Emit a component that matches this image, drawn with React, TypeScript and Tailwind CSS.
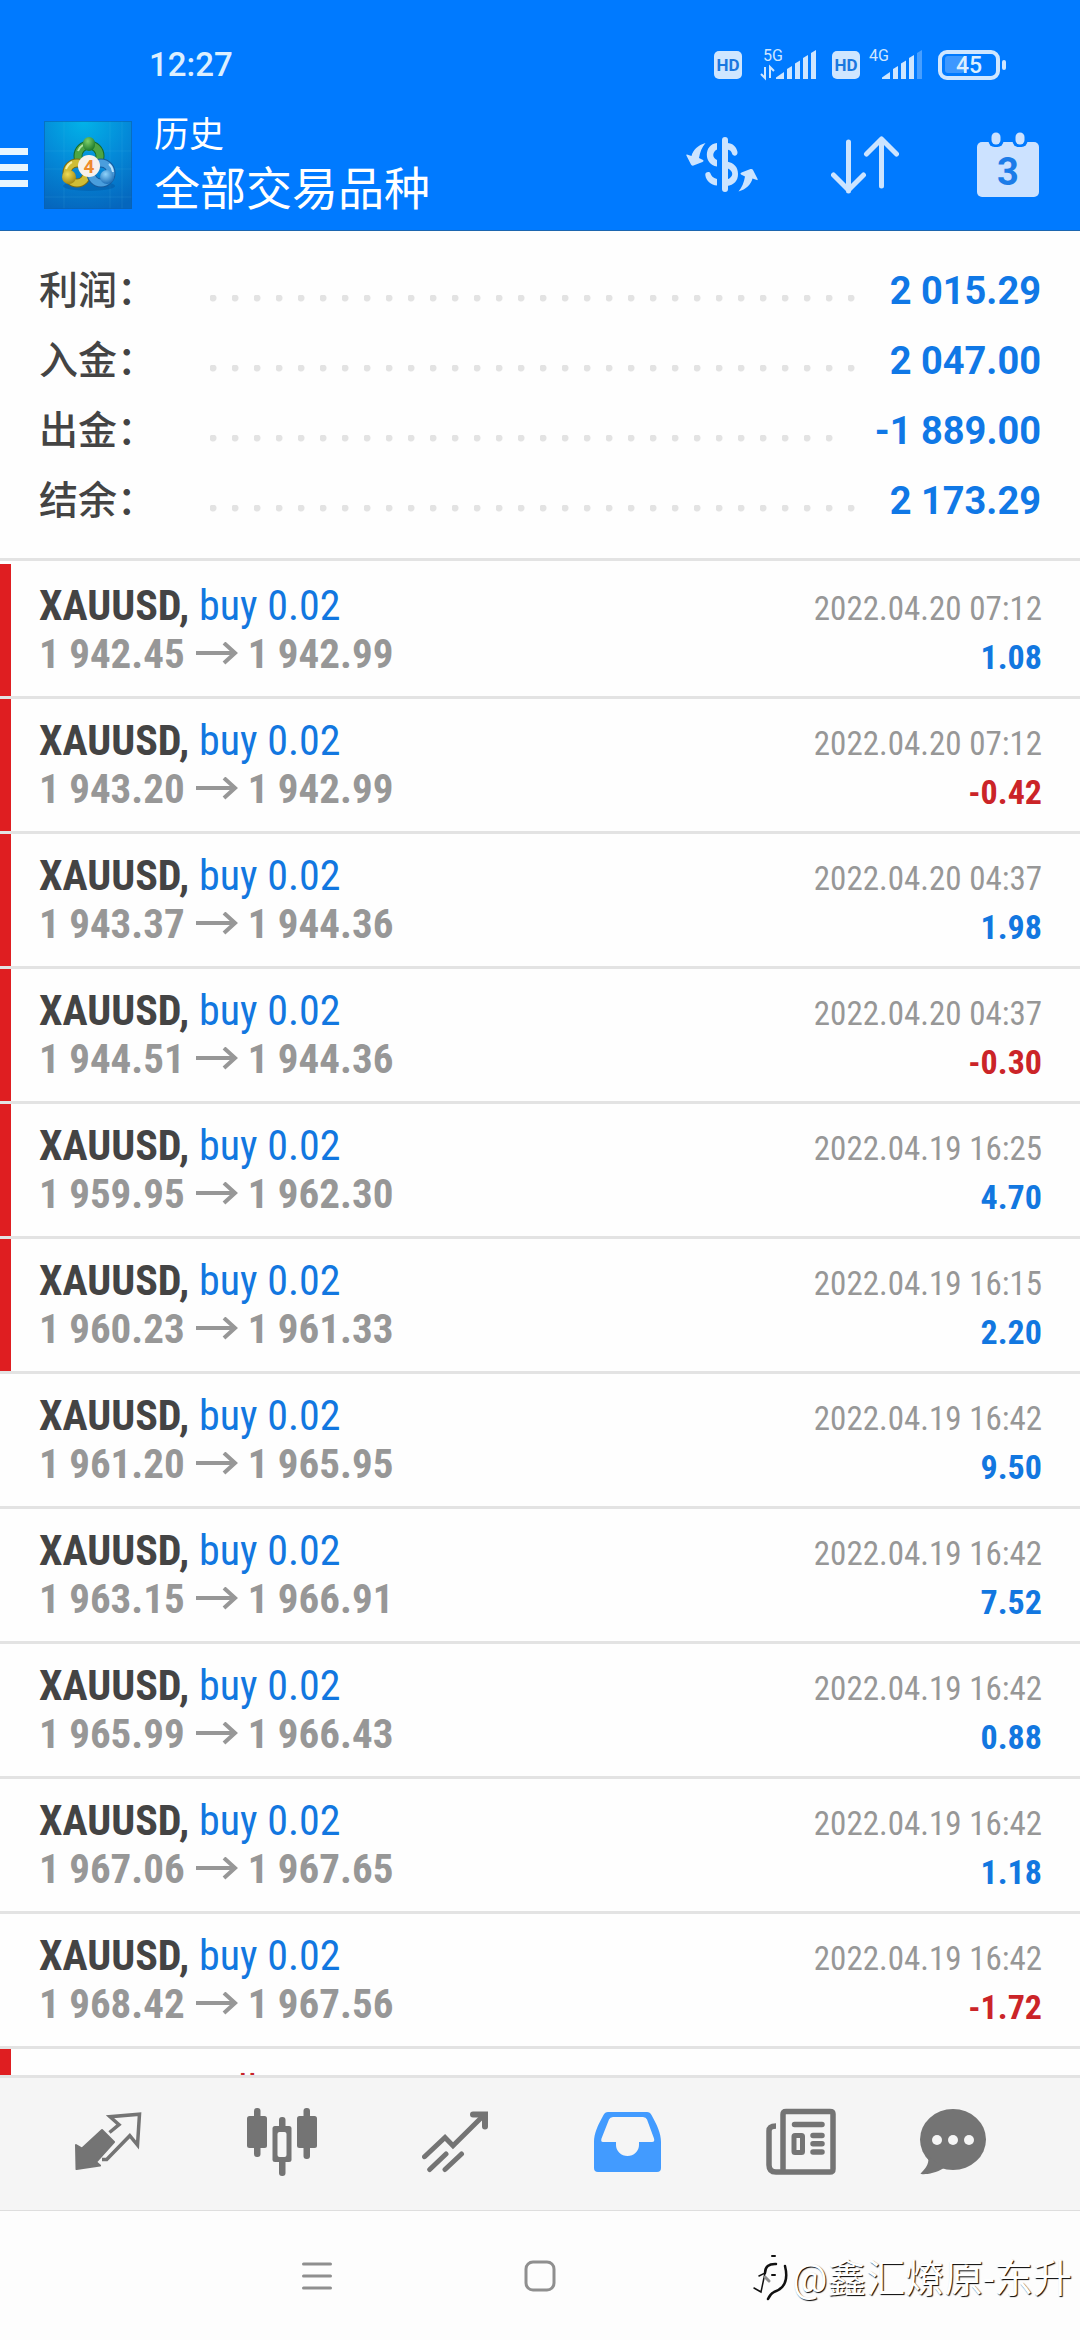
import type { ReactNode } from "react";

interface Deal {
  symbol: string;
  side: "buy" | "sell";
  volume: string;
  open?: string;
  close?: string;
  time?: string;
  profit?: string;
  marked: boolean;
}

const summary = [
  { label: "利润：", value: "2 015.29" },
  { label: "入金：", value: "2 047.00" },
  { label: "出金：", value: "-1 889.00" },
  { label: "结余：", value: "2 173.29" },
];

const deals: Deal[] = [
  { symbol: "XAUUSD", side: "buy", volume: "0.02", open: "1 942.45", close: "1 942.99", time: "2022.04.20 07:12", profit: "1.08", marked: true },
  { symbol: "XAUUSD", side: "buy", volume: "0.02", open: "1 943.20", close: "1 942.99", time: "2022.04.20 07:12", profit: "-0.42", marked: true },
  { symbol: "XAUUSD", side: "buy", volume: "0.02", open: "1 943.37", close: "1 944.36", time: "2022.04.20 04:37", profit: "1.98", marked: true },
  { symbol: "XAUUSD", side: "buy", volume: "0.02", open: "1 944.51", close: "1 944.36", time: "2022.04.20 04:37", profit: "-0.30", marked: true },
  { symbol: "XAUUSD", side: "buy", volume: "0.02", open: "1 959.95", close: "1 962.30", time: "2022.04.19 16:25", profit: "4.70", marked: true },
  { symbol: "XAUUSD", side: "buy", volume: "0.02", open: "1 960.23", close: "1 961.33", time: "2022.04.19 16:15", profit: "2.20", marked: true },
  { symbol: "XAUUSD", side: "buy", volume: "0.02", open: "1 961.20", close: "1 965.95", time: "2022.04.19 16:42", profit: "9.50", marked: false },
  { symbol: "XAUUSD", side: "buy", volume: "0.02", open: "1 963.15", close: "1 966.91", time: "2022.04.19 16:42", profit: "7.52", marked: false },
  { symbol: "XAUUSD", side: "buy", volume: "0.02", open: "1 965.99", close: "1 966.43", time: "2022.04.19 16:42", profit: "0.88", marked: false },
  { symbol: "XAUUSD", side: "buy", volume: "0.02", open: "1 967.06", close: "1 967.65", time: "2022.04.19 16:42", profit: "1.18", marked: false },
  { symbol: "XAUUSD", side: "buy", volume: "0.02", open: "1 968.42", close: "1 967.56", time: "2022.04.19 16:42", profit: "-1.72", marked: false },
  { symbol: "XAUUSD", side: "sell", volume: "0.02", marked: true },
];

function HdBadge() {
  return (
    <span className="flex size-7 items-center justify-center rounded-[5px] bg-[#cfe6ff] text-[17px] font-bold leading-none text-[#1a78e0]">
      HD
    </span>
  );
}

function Bars({ weak }: { weak?: boolean }) {
  return (
    <g fill="#cfe6ff">
      <path d="M0 30V28.500L8 23V30Z" />
      <path d="M11 20l5-3v13h-5z" />
      <path d="M19 14.500l5-3V30h-5z" />
      <path d="M27 9l5-3v24h-5z" />
      <path d="M35 4l5-3v29h-5z" opacity={weak ? 0.35 : 1} />
    </g>
  );
}

function StatusBar() {
  return (
    <div className="flex h-9 items-center justify-between pl-[149px] pr-[73px] text-[#dcefff]">
      <span className="text-[33px] font-medium leading-9">12:27</span>
      <div className="flex items-center gap-4">
        <div className="flex items-center gap-1">
          <HdBadge />
          <svg className="overflow-visible" width="70" height="32" viewBox="0 0 70 32">
            <text x="17" y="12" fontSize="16" fill="#cfe6ff">5G</text>
            <path d="M19 18v11l-4-4M24 29V18l4 4" fill="none" stroke="#cfe6ff" strokeWidth="2" />
            <g transform="translate(30 0)">
              <Bars />
            </g>
          </svg>
        </div>
        <div className="flex items-center gap-1">
          <HdBadge />
          <svg className="overflow-visible" width="58" height="32" viewBox="0 0 58 32">
            <text x="5" y="12" fontSize="16" fill="#cfe6ff">4G</text>
            <g transform="translate(18 0)">
              <Bars weak />
            </g>
          </svg>
        </div>
        <svg width="69" height="32" viewBox="0 0 69 32">
          <rect x="7" y="7" width="19" height="17" rx="3" fill="#3d98ff" />
          <rect x="2" y="3" width="58" height="26" rx="7" fill="none" stroke="#cfe6ff" strokeWidth="4" />
          <rect x="64" y="11" width="4" height="10" rx="2" fill="#cfe6ff" />
          <text x="31" y="24" fontSize="23" fontWeight="500" textAnchor="middle" fill="#dcefff">45</text>
        </svg>
      </div>
    </div>
  );
}

function AppLogo() {
  return (
    <svg width="88" height="88" viewBox="0 0 88 88">
      <defs>
        <radialGradient id="logoBg" cx="0.45" cy="0" r="1.05">
          <stop offset="0" stopColor="#02b3e8" />
          <stop offset="0.5" stopColor="#0489d8" />
          <stop offset="1" stopColor="#0566bd" />
        </radialGradient>
        <radialGradient id="green" cx="0.4" cy="0.3" r="0.7">
          <stop offset="0" stopColor="#7fd06a" />
          <stop offset="1" stopColor="#1c7a2c" />
        </radialGradient>
        <radialGradient id="yellow" cx="0.4" cy="0.3" r="0.7">
          <stop offset="0" stopColor="#f0dd58" />
          <stop offset="1" stopColor="#a48a12" />
        </radialGradient>
        <radialGradient id="blue" cx="0.4" cy="0.3" r="0.7">
          <stop offset="0" stopColor="#8fd3fb" />
          <stop offset="1" stopColor="#1d6fb8" />
        </radialGradient>
      </defs>
      <rect width="88" height="88" fill="url(#logoBg)" />
      <path d="M0 30H88M0 48H88M0 76H88M20 0V88M66 0V88M78 0V88" stroke="#5fc4f2" strokeOpacity="0.12" />
      <rect x="0.500" y="0.500" width="87" height="87" fill="none" stroke="#0a5fb0" strokeOpacity="0.6" />
      <ellipse cx="45" cy="65" rx="26" ry="5" fill="#044a92" opacity="0.35" />
      <g fill="none">
        <circle cx="45" cy="35" r="11" stroke="#17692a" strokeWidth="9" />
        <circle cx="45" cy="35" r="11" stroke="#4ea544" strokeWidth="7" />
        <circle cx="33" cy="52" r="10" stroke="#7d6b10" strokeWidth="9" />
        <circle cx="33" cy="52" r="10" stroke="#d0bd35" strokeWidth="7" />
        <circle cx="57" cy="52" r="10" stroke="#175a9c" strokeWidth="9" />
        <circle cx="57" cy="52" r="10" stroke="#4a9edd" strokeWidth="7" />
        <path d="M34 30a12 12 0 0 1 5-6" stroke="#b4e6a3" strokeWidth="2" />
        <path d="M22 48a12 12 0 0 1 6-7" stroke="#f8f0a2" strokeWidth="2" />
        <path d="M65 43a12 12 0 0 1 4 8" stroke="#b9e3fd" strokeWidth="2" />
      </g>
      <rect x="39" y="16" width="12" height="14" rx="6" fill="url(#green)" />
      <circle cx="25" cy="56" r="7" fill="url(#yellow)" />
      <circle cx="63" cy="56" r="7" fill="url(#blue)" />
      <circle cx="45" cy="45" r="11" fill="#f7f1ec" />
      <text x="45" y="52" fontSize="19" fontWeight="700" textAnchor="middle" fill="#ee8a2c">4</text>
    </svg>
  );
}

function CurrencyIcon() {
  const arrow =
    "M19.500 8C12 10 7 15 5.500 21L1 19.500Q0 19.300.4 20.500L5 29.500Q5.600 31 7.500 30.500L16.500 27Q18.500 26 17 25L13 23C14 17 16 12 19.500 8Z";
  return (
    <svg width="72" height="60" viewBox="0 0 72 60" fill="#cce4ff">
      <path d={arrow} />
      <path d={arrow} transform="rotate(180 36 32.300)" />
      <rect x="36" y="2" width="6" height="55" rx="3" />
      <path d="M31 8C17.500 9 17.500 30 31 31.500V25C26 23 26 17 31 14.500Z" />
      <path d="M31 50.500V44C27 43 25 40.500 24.500 38.500C23.500 36 18.800 37 19.300 40C20 46 25 50 31 50.500Z" />
      <path d="M41 8C47 8 50.500 12 51.500 17C52 21 47 22 46 18.500C45.500 16 44 15 41 14.500Z" />
      <path d="M41 26.500C48 28 52 32 52 39C52 46 48 50 41 51V44.500C48 42 48 36 41 33Z" />
    </svg>
  );
}

function SortIcon() {
  return (
    <svg width="68" height="60" viewBox="0 0 68 60" fill="none" stroke="#cce4ff" strokeWidth="5" strokeLinecap="round" strokeLinejoin="round">
      <path d="M17.500 7V56M2.500 40L17.500 55L32.500 40" />
      <path d="M50.500 51V4M35.500 19L50.500 4L65.500 19" />
    </svg>
  );
}

function CalendarIcon() {
  return (
    <svg width="64" height="68" viewBox="0 0 64 68">
      <rect x="1" y="11" width="62" height="55" rx="5" fill="#cce2ff" />
      <rect x="12.500" y="-2" width="15" height="18" rx="6" fill="#007aff" />
      <rect x="36.500" y="-2" width="15" height="18" rx="6" fill="#007aff" />
      <rect x="15.500" y="1.500" width="9" height="12" rx="4.500" fill="#cce2ff" />
      <rect x="39.500" y="1.500" width="9" height="12" rx="4.500" fill="#cce2ff" />
      <text x="32" y="54" fontSize="38" fontWeight="700" textAnchor="middle" fill="#1c7ce8">3</text>
    </svg>
  );
}

function Header() {
  return (
    <header className="border-b border-[#1c66b0] bg-[#007aff] pt-[47px]">
      <StatusBar />
      <div className="flex items-center pb-3 pt-[29px]">
        <button aria-label="菜单" className="flex flex-col gap-[9px] pt-1">
          <span className="h-[7px] w-7 bg-[#e8f6ff]" />
          <span className="h-[7px] w-7 bg-[#e8f6ff]" />
          <span className="h-[7px] w-7 bg-[#e8f6ff]" />
        </button>
        <div className="pl-4">
          <AppLogo />
        </div>
        <div className="flex-1 pl-[22px] text-white">
          <p className="text-[35px] leading-[48px]">历史</p>
          <h1 className="text-[46px] leading-[58px]">全部交易品种</h1>
        </div>
        <div className="flex items-center gap-[71px] pr-9">
          <button aria-label="货币" className="flex w-[72px] justify-center">
            <CurrencyIcon />
          </button>
          <button aria-label="排序" className="flex w-[72px] justify-center">
            <SortIcon />
          </button>
          <button aria-label="日期" className="flex w-[72px] justify-center">
            <CalendarIcon />
          </button>
        </div>
      </div>
    </header>
  );
}

function DealRow({ deal }: { deal: Deal }) {
  const loss = deal.profit?.startsWith("-");
  return (
    <li className="flex h-[135px] border-b-3 border-[#e3e3e3]">
      <span className={`w-[11px] shrink-0 ${deal.marked ? "bg-[#df1e21]" : ""}`} />
      <div className="flex flex-1 justify-between pl-7 pr-[38px] pt-[18px] font-['Roboto_Condensed',Roboto,sans-serif]">
        <div>
          <p className="text-[42px] font-bold leading-[48px] text-[#444444]">
            {deal.symbol},{" "}
            <span className={`font-normal ${deal.side === "buy" ? "text-[#1277e0]" : "text-[#c9252b]"}`}>
              {deal.side} {deal.volume}
            </span>
          </p>
          {deal.open && (
            <p className="flex items-center text-[41px] font-bold leading-[48px] text-[#979797]">
              {deal.open}
              <svg className="mx-[10px]" width="43" height="24" viewBox="0 0 43 24" fill="none" stroke="#979797" strokeWidth="4">
                <path d="M1 11H40M29 1L40 11L29 21" />
              </svg>
              {deal.close}
            </p>
          )}
        </div>
        {deal.time && (
          <div className="pt-[3px] text-right leading-[48px]">
            <p className="text-[33px] text-[#979797]">{deal.time}</p>
            <p className={`text-[34px] font-bold ${loss ? "text-[#cb2428]" : "text-[#1277e0]"}`}>{deal.profit}</p>
          </div>
        )}
      </div>
    </li>
  );
}

function Tab({ label, children }: { label: string; children: ReactNode }) {
  return (
    <button aria-label={label} className="flex flex-1 items-center justify-center last:w-[132px] last:flex-none">
      {children}
    </button>
  );
}

function TabBar() {
  return (
    <nav className="flex h-[136px] border-b border-t-3 border-b-[#dedede] border-t-[#e3e3e3] bg-[#f5f5f5] pb-1 pl-[22px] pr-[61px] text-[#747474]">
      <Tab label="行情">
        <svg width="67" height="62" viewBox="0 0 67 62" fill="none" stroke="currentColor">
          <path d="M1 34L7 37.500L27 19L39 31L21 51L25 54.500L1.500 58Z" fill="currentColor" strokeWidth="2" strokeLinejoin="round" />
          <path d="M34.500 21.500L44 13.700L35 5.700L64.500 3.200L62.500 34L54.800 24.700L31.700 48.500H27" strokeWidth="3.500" />
        </svg>
      </Tab>
      <Tab label="图表">
        <svg width="70" height="70" viewBox="0 0 70 70" fill="currentColor">
          <rect x="0" y="9" width="20" height="32" rx="2.500" />
          <rect x="7" y="1" width="6.500" height="49" rx="3" />
          <rect x="50" y="9" width="20" height="32" rx="2.500" />
          <rect x="56.500" y="1" width="6.500" height="51" rx="3" />
          <rect x="32" y="10" width="6.500" height="59" rx="3" />
          <rect x="25.500" y="19" width="19" height="36" rx="2.500" />
          <rect x="30.500" y="25" width="9" height="25" rx="2" fill="#f5f5f5" />
        </svg>
      </Tab>
      <Tab label="交易">
        <svg width="66" height="62" viewBox="0 0 66 62" fill="none" stroke="currentColor" strokeWidth="5" strokeLinecap="round">
          <path d="M2.500 45.700L23 26.500L31 34.700L62 4" />
          <path d="M51 3.500H63V15.500" strokeWidth="6" />
          <path d="M7.700 58.500L24 43M23 58.500L39.500 43" />
        </svg>
      </Tab>
      <Tab label="历史">
        <svg width="67" height="62" viewBox="0 0 67 62" fill="#429bff">
          <path
            fillRule="evenodd"
            d="M14 1H53Q56 1 57.500 4C63 14 67 22 67 31V57Q67 61 63 61H4Q0 61 0 57V31C0 22 4 14 9.500 4Q11 1 14 1ZM19 6Q16 6 15 8.500L7.500 27.500Q6.500 31 9 31H22V34A11.500 11 0 0 0 45 34V31H58Q61 31 60 27.500L53 8.500Q52 6 49 6Z"
          />
        </svg>
      </Tab>
      <Tab label="新闻">
        <svg width="70" height="68" viewBox="0 0 70 68" fill="none" stroke="currentColor" strokeWidth="5.500">
          <path d="M10 18Q3 18 3 23V57Q3 64 10 64H64Q67 64 67 61V6Q67 3.500 64 3.500H20Q17 3.500 17 6.500V64" />
          <path d="M28.500 16.500H56M47 27.500H56M47 35.700H56M47 44H56" strokeLinecap="round" />
          <rect x="28" y="27.500" width="8.500" height="17" rx="1" strokeWidth="5" />
        </svg>
      </Tab>
      <Tab label="消息">
        <svg width="66" height="68" viewBox="0 0 66 68" fill="currentColor">
          <ellipse cx="33" cy="31.500" rx="33" ry="30.500" />
          <path d="M6 47L8.400 52C8 58 4 62 .5 65.500C1 67 14 66.500 24 60Z" />
          <circle cx="17" cy="32" r="5" fill="#f5f5f5" />
          <circle cx="33" cy="32" r="5" fill="#f5f5f5" />
          <circle cx="49" cy="32" r="5" fill="#f5f5f5" />
        </svg>
      </Tab>
    </nav>
  );
}

function SystemBar() {
  return (
    <div className="relative flex h-[129px] items-center justify-center gap-[191px] bg-[#fdfdfd]">
      <button aria-label="最近任务">
        <svg width="32" height="32" viewBox="0 0 32 32" stroke="#8f8f8f" strokeWidth="3" strokeLinecap="round">
          <path d="M2.500 4H29.500M2.500 16H29.500M2.500 28H29.500" />
        </svg>
      </button>
      <button aria-label="主屏幕">
        <svg width="32" height="32" viewBox="0 0 32 32" fill="none" stroke="#8f8f8f" strokeWidth="3">
          <rect x="2" y="2" width="28" height="28" rx="7" />
        </svg>
      </button>
      <button aria-label="返回" className="size-8" />
      <div className="absolute right-2 top-[43px] flex items-center">
        <svg width="42" height="50" viewBox="0 0 42 50" fill="none" stroke="#111111" strokeLinecap="round">
          <path d="M35 12C38 24 36 34 24 38Q20 40 18 45" strokeWidth="2.500" />
          <path d="M15 19Q15 9.500 26 10" strokeWidth="2.500" />
          <path d="M9 22L15 19L11 38L4 34" strokeWidth="1.500" />
          <path d="M15 23L19 27" stroke="#8f8f8f" strokeWidth="3" />
          <path d="M22 21H25M22 2H25" strokeWidth="2" />
        </svg>
        <span className="text-[39px] leading-[50px] text-white [text-shadow:1px_1px_1px_#000]">@鑫汇燎原-东升</span>
      </div>
    </div>
  );
}

export default function App() {
  return (
    <div lang="zh-CN" className="flex h-screen flex-col overflow-hidden bg-[#fefefe] font-[Roboto,'Noto_Sans_CJK_SC',sans-serif]">
      <Header />

      {/* Totals */}
      <dl className="shrink-0 border-b-3 border-[#e3e3e3] pb-[22px] pl-[39px] pr-[39px] pt-[25px]">
        {summary.map((item) => (
          <div key={item.label} className="flex h-[70px] items-center">
            <dt className="w-[171px] text-[39px] font-medium leading-[70px] text-[#444444]">{item.label}</dt>
            <dd className="flex flex-1 items-center">
              <span className="mr-[30px] mt-[14px] h-[7px] flex-1 bg-[radial-gradient(circle_at_3px_3px,#e3e3e3_3px,transparent_4px)] bg-[length:22px_7px] bg-repeat-x" />
              <span className="text-[38px] font-bold leading-[70px] text-[#1078e6]">{item.value}</span>
            </dd>
          </div>
        ))}
      </dl>

      {/* Closed deals */}
      <ul className="min-h-0 flex-1 overflow-hidden pt-[3px]">
        {deals.map((deal, i) => (
          <DealRow key={i} deal={deal} />
        ))}
      </ul>

      <TabBar />
      <SystemBar />
    </div>
  );
}
